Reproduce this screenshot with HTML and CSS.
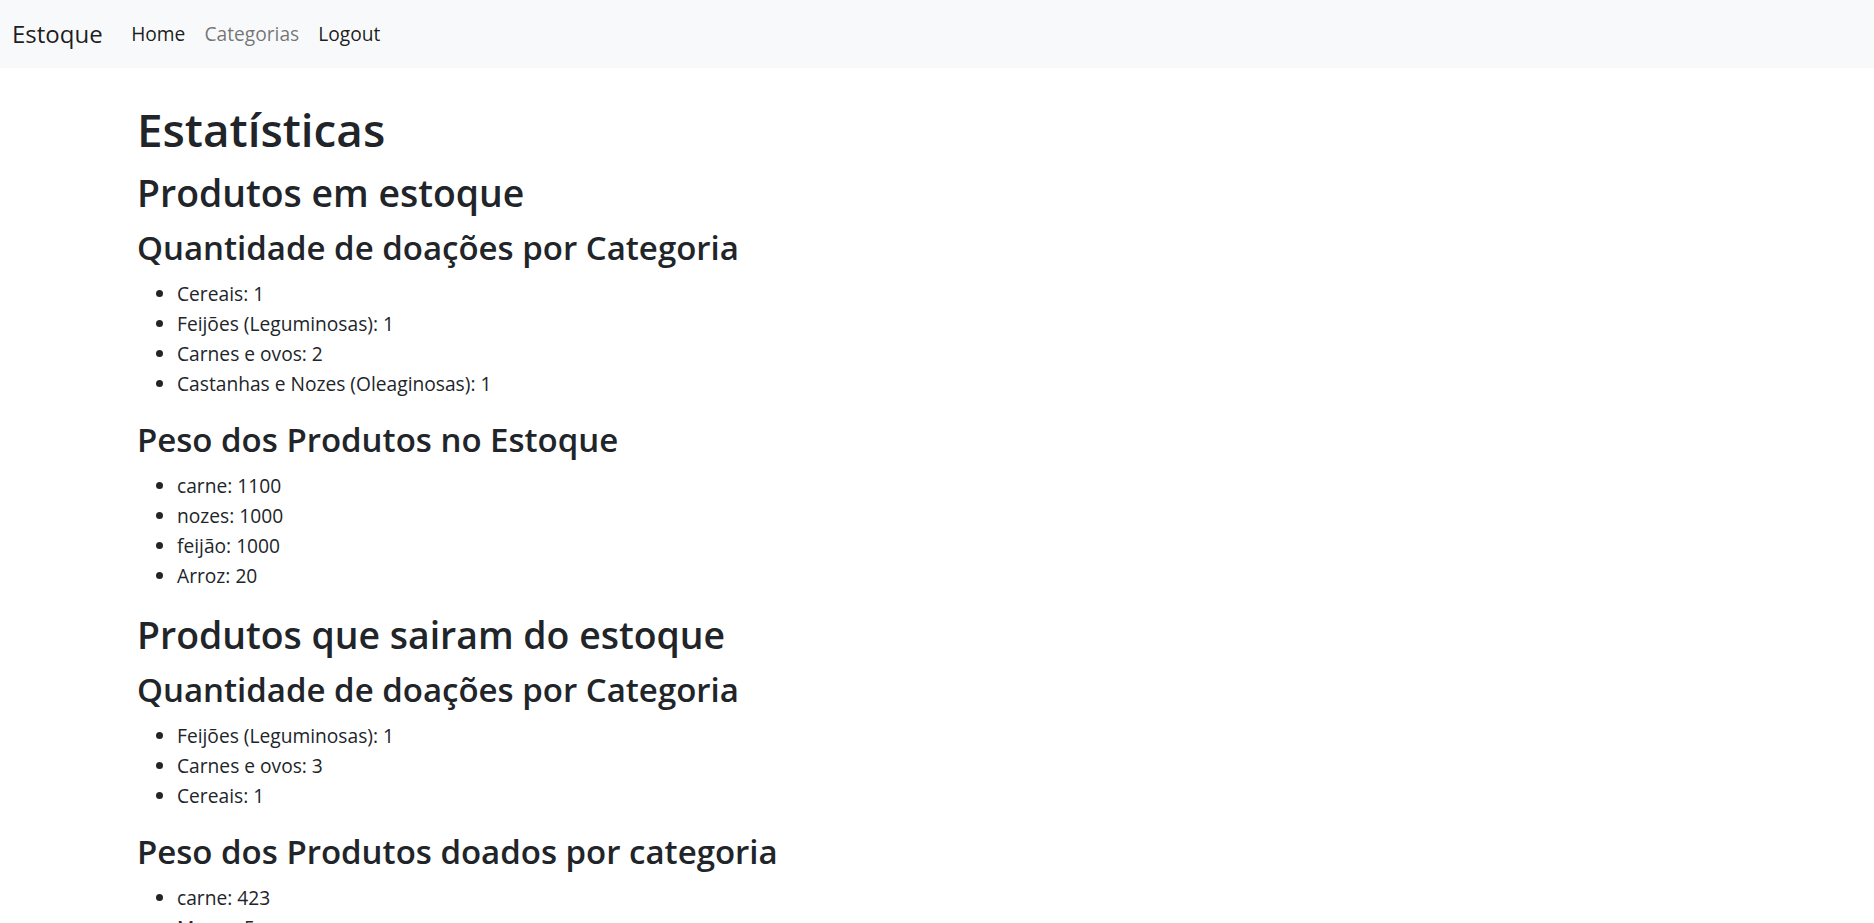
FILE: index.html
```html
<!DOCTYPE html>
<html lang="pt-BR">
<head>
<meta charset="utf-8">
<title>Estatísticas</title>
<link rel="stylesheet" href="styles.css">
</head>
<body>
<nav class="navbar">
  <a class="brand" href="#">Estoque</a>
  <ul class="nav">
    <li><a class="nav-link" href="#">Home</a></li>
    <li><a class="nav-link muted" href="#">Categorias</a></li>
    <li><a class="nav-link" href="#">Logout</a></li>
  </ul>
</nav>
<main class="container">
  <h1 class="h1">Estatísticas</h1>
  <h2 class="h2">Produtos em estoque</h2>
  <h3 class="h3">Quantidade de doações por Categoria</h3>
  <ul class="list">
    <li>Cereais: 1</li>
    <li>Feijões (Leguminosas): 1</li>
    <li>Carnes e ovos: 2</li>
    <li>Castanhas e Nozes (Oleaginosas): 1</li>
  </ul>
  <h3 class="h3">Peso dos Produtos no Estoque</h3>
  <ul class="list">
    <li>carne: 1100</li>
    <li>nozes: 1000</li>
    <li>feijão: 1000</li>
    <li>Arroz: 20</li>
  </ul>
  <h2 class="h2">Produtos que sairam do estoque</h2>
  <h3 class="h3">Quantidade de doações por Categoria</h3>
  <ul class="list">
    <li>Feijões (Leguminosas): 1</li>
    <li>Carnes e ovos: 3</li>
    <li>Cereais: 1</li>
  </ul>
  <h3 class="h3">Peso dos Produtos doados por categoria</h3>
  <ul class="list">
    <li>carne: 423</li>
    <li>Massa: 5</li>
  </ul>
</main>
</body>
</html>
```
FILE: styles.css
```css
* { box-sizing: border-box; }
html, body { margin: 0; padding: 0; }
body {
  font-family: "Segoe UI", "Open Sans", "Noto Sans", sans-serif;
  font-size: 19.2px;
  line-height: 30px;
  color: #212529;
  background: #fff;
}
a { text-decoration: none; }

.navbar {
  display: flex;
  align-items: center;
  height: 68px;
  padding: 0 12px;
  background: #f8f9fa;
}
.brand {
  font-size: 24px;
  line-height: 36px;
  color: rgba(0, 0, 0, 0.9);
  margin-right: 19px;
}
.nav {
  display: flex;
  list-style: none;
  margin: 0;
  padding: 0;
}
.nav-link {
  display: block;
  padding: 10px 9.5px;
  font-size: 19.2px;
  line-height: 30px;
  color: rgba(0, 0, 0, 0.9);
}
.nav-link.muted { color: rgba(0, 0, 0, 0.55); }

.container {
  max-width: 1630px;
  margin: 0 auto;
  padding: 31px 15px 0;
}
.h1, .h2, .h3 {
  margin: 0 0 10px;
  font-weight: 600;
  color: #212529;
}
.h1 { font-size: 45.8px; line-height: 60px; }
.h2 { font-size: 37.4px; line-height: 48px; }
.h3 { font-size: 33px; line-height: 42px; }
.list {
  margin: 0 0 20px;
  padding-left: 40px;
}
```
